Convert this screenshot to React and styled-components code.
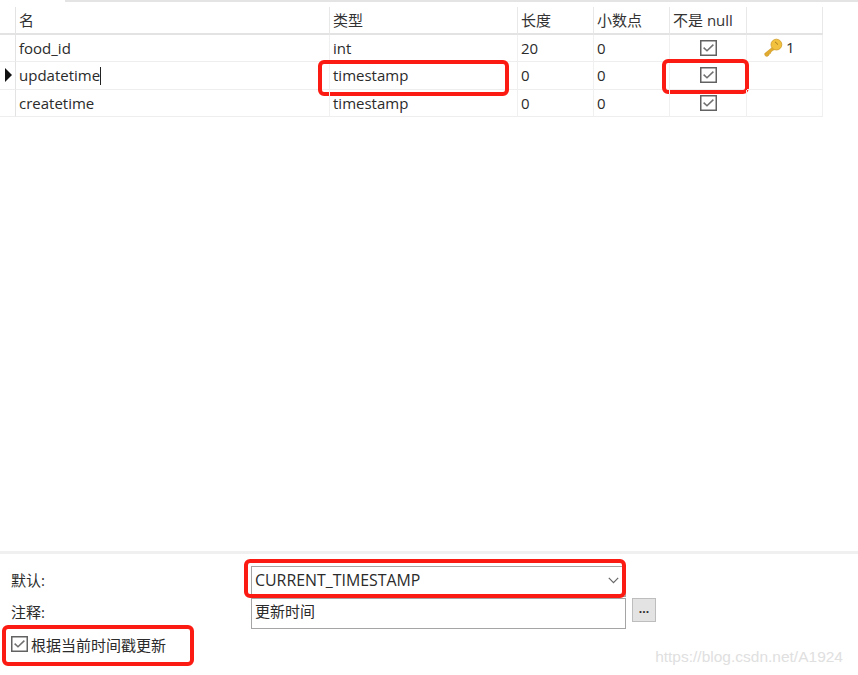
import React from 'react'
import styled, { createGlobalStyle } from 'styled-components'

const GlobalStyle = createGlobalStyle`
  html, body { margin: 0; padding: 0; background: #fff; }
  body { font-family: "Open Sans", "Noto Sans", "Noto Sans CJK SC", sans-serif; color: #2b2b2b; }
`

const columns = ['名', '类型', '长度', '小数点', '不是 null', '']

const rows = [
  { name: 'food_id', type: 'int', length: '20', decimals: '0', key: true },
  { name: 'updatetime', type: 'timestamp', length: '0', decimals: '0', current: true },
  { name: 'createtime', type: 'timestamp', length: '0', decimals: '0' },
]

function CheckIcon() {
  return (
    <svg width="17" height="16" viewBox="0 0 17 16">
      <rect x="0.75" y="0.75" width="15.5" height="14.5" fill="#fff" stroke="#626262" strokeWidth="1.5" />
      <path d="M3.6 7.6 L7 10.8 L13.4 4.6" fill="none" stroke="#707070" strokeWidth="1.5" />
    </svg>
  )
}

function KeyIcon() {
  return (
    <svg width="20" height="20" viewBox="0 0 20 20">
      <path d="M10.4 8.4 L1.6 15.6 L2 17.6 L4 18.6 L6.2 17 L6 15.6 L7.6 15.4 L8 13.8 L12.4 10.8 Z" fill="#e0ab2e" stroke="#c78f1d" strokeWidth="0.5" />
      <circle cx="13.4" cy="6.6" r="5.4" fill="#f2c23f" stroke="#cf9a24" strokeWidth="0.8" />
      <path d="M12 3.8 L15 6.6" stroke="#a97c1c" strokeWidth="1" fill="none" />
    </svg>
  )
}

function App() {
  return (
    <Page>
      <GlobalStyle />
      <TopRule />
      <Table>
        <GutterHead />
        {columns.map((title, i) => (
          <HeadCell key={i}>{title}</HeadCell>
        ))}
        {rows.map((row) => (
          <React.Fragment key={row.name}>
            <Gutter>{row.current && <RowPointer />}</Gutter>
            <Cell>
              {row.name}
              {row.current && <Caret />}
            </Cell>
            <Cell>
              {row.type}
              {row.current && <TypeMark />}
            </Cell>
            <Cell>{row.length}</Cell>
            <Cell>{row.decimals}</Cell>
            <CheckCell>
              <CheckIcon />
              {row.current && <NullMark />}
            </CheckCell>
            <KeyCell>
              {row.key && <KeyIcon />}
              {row.key && <KeyNumber>1</KeyNumber>}
            </KeyCell>
          </React.Fragment>
        ))}
      </Table>
      <Spacer />
      <Panel>
        <Form>
          <Label>默认:</Label>
          <Combo>
            <ComboText>CURRENT_TIMESTAMP</ComboText>
            <svg width="11" height="7" viewBox="0 0 11 7">
              <path d="M0.8 0.8 L5.5 5.6 L10.2 0.8" fill="none" stroke="#666" strokeWidth="1.2" />
            </svg>
            <ComboMark />
          </Combo>
          <Label>注释:</Label>
          <CommentRow>
            <CommentInput>更新时间</CommentInput>
            <MoreButton>...</MoreButton>
          </CommentRow>
        </Form>
        <CheckRow>
          <CheckIcon />
          根据当前时间戳更新
          <CheckMark />
        </CheckRow>
        <Watermark>https://blog.csdn.net/A1924</Watermark>
      </Panel>
    </Page>
  )
}

export default App

const Page = styled.div`
  width: 858px;
  height: 675px;
  display: flex;
  flex-direction: column;
  overflow: hidden;
  background: #fff;
`
const TopRule = styled.div`
  height: 2px;
  margin-left: 65px;
  margin-bottom: 5px;
  background: #e4e4e4;
`
const Table = styled.div`
  display: grid;
  grid-template-columns: 16px 314px 188px 76px 76px 77px 76px;
  grid-auto-rows: 27.5px;
  width: 823px;
  font-size: 15px;
  line-height: 27px;
`
const GutterHead = styled.div`
  border-right: 1px solid #e3e3e3;
  border-bottom: 2px solid #e3e3e3;
  box-sizing: border-box;
`
const HeadCell = styled.div`
  box-sizing: border-box;
  padding-left: 3px;
  border-right: 1px solid #e8e8e8;
  border-bottom: 2px solid #e3e3e3;
  color: #333;
`
const Gutter = styled.div`
  box-sizing: border-box;
  display: flex;
  align-items: center;
  padding-left: 5px;
  border-right: 1px solid #e3e3e3;
  border-bottom: 1px solid #eeeeee;
`
const RowPointer = styled.span`
  width: 0;
  height: 0;
  border-left: 7px solid #111;
  border-top: 7px solid transparent;
  border-bottom: 7px solid transparent;
`
const Cell = styled.div`
  position: relative;
  box-sizing: border-box;
  padding-left: 3px;
  border-right: 1px solid #f0f0f0;
  border-bottom: 1px solid #eeeeee;
  white-space: nowrap;
`
const Caret = styled.span`
  display: inline-block;
  width: 1px;
  height: 18px;
  vertical-align: -4px;
  background: #222;
`
const CheckCell = styled(Cell)`
  display: flex;
  align-items: center;
  justify-content: center;
  padding-left: 0;
`
const KeyCell = styled(Cell)`
  display: flex;
  align-items: center;
  padding-left: 16px;
`
const KeyNumber = styled.span`
  margin-left: 3px;
`
const Mark = styled.span`
  position: absolute;
  box-sizing: border-box;
  border: 4px solid #fb1b12;
  border-radius: 6px;
  pointer-events: none;
`
const TypeMark = styled(Mark)`
  left: -12px;
  top: -2px;
  width: 191px;
  height: 36px;
`
const NullMark = styled(Mark)`
  left: -8px;
  top: -3px;
  width: 87px;
  height: 35px;
`
const Spacer = styled.div`
  flex: 1;
`
const Panel = styled.div`
  position: relative;
  height: 124px;
  box-sizing: border-box;
  border-top: 3px solid #f0f0f0;
  padding: 12px 0 0 11px;
  font-size: 15px;
`
const Form = styled.div`
  display: grid;
  grid-template-columns: 240px 375px;
  grid-template-rows: 32px 31px;
`
const Label = styled.div`
  line-height: 28px;
`
const Combo = styled.div`
  position: relative;
  box-sizing: border-box;
  height: 31px;
  display: flex;
  align-items: center;
  justify-content: space-between;
  padding: 0 6px 3px 3px;
  border: 1px solid #a5a5a5;
`
const ComboText = styled.span`
  font-size: 15.9px;
`
const ComboMark = styled(Mark)`
  left: -8px;
  top: -8px;
  width: 382px;
  height: 39px;
`
const CommentRow = styled.div`
  display: flex;
  gap: 6px;
  align-items: flex-start;
`
const CommentInput = styled.div`
  flex: none;
  box-sizing: border-box;
  width: 375px;
  height: 31px;
  padding: 0 3px;
  line-height: 25px;
  border: 1px solid #a5a5a5;
`
const MoreButton = styled.div`
  flex: none;
  box-sizing: border-box;
  width: 24px;
  height: 24px;
  text-align: center;
  line-height: 20px;
  font-size: 12px;
  font-weight: 700;
  background: #e3e3e3;
  border: 1px solid #bdbdbd;
`
const CheckRow = styled.div`
  position: relative;
  width: 170px;
  margin-top: 7px;
  display: flex;
  align-items: center;
  gap: 3px;
  height: 16px;
  white-space: nowrap;
`
const CheckMark = styled(Mark)`
  left: -9px;
  top: -11px;
  width: 192px;
  height: 41px;
`
const Watermark = styled.div`
  position: absolute;
  right: 15px;
  bottom: 9px;
  font-family: "Liberation Sans", sans-serif;
  font-size: 15.5px;
  color: #e0e0e0;
`
